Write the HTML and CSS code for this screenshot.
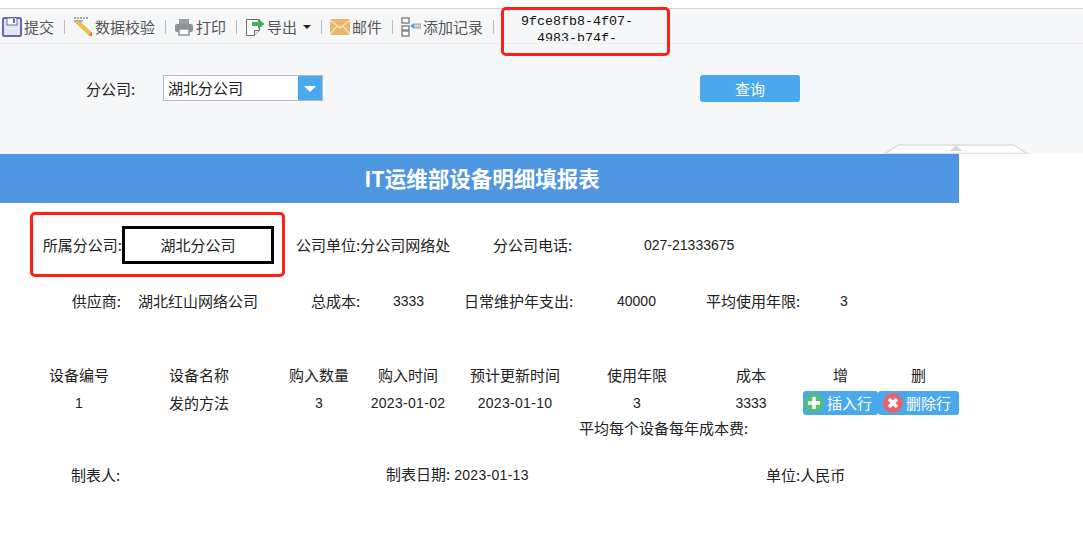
FILE: index.html
```html
<!DOCTYPE html>
<html lang="zh-CN">
<head>
    <meta charset="UTF-8">
    <meta name="viewport" content="width=device-width, initial-scale=1.0">
    <title>IT运维部设备明细填报表</title>
    <link rel="stylesheet" href="styles.css">
</head>
<body>
    <div class="toolbar">
        <div class="tool">
            <svg width="20" height="20" viewBox="0 0 20 20"><rect x="1" y="1" width="18" height="18" rx="1.500" fill="#e4e7f3" stroke="#5f6cab" stroke-width="2"/><rect x="5" y="1" width="10" height="7" fill="#fff" stroke="#5f6cab"/><rect x="11" y="2" width="2" height="4" fill="#5f6cab"/></svg>
            <span>提交</span>
        </div>
        <i class="sep"></i>
        <div class="tool">
            <svg width="20" height="20" viewBox="0 0 20 20"><path d="M1 1h15" stroke="#888" stroke-width="1.500" stroke-dasharray="2 1"/><path d="M1 4h9" stroke="#4aa9ec" stroke-width="1.500"/><path d="M2 5l3-2 14 13-2 3z" fill="#f1c04c" stroke="#d99a2b" stroke-width=".6"/><path d="M16 18l2.500-2.500 1 4z" fill="#ea5a4e"/></svg>
            <span>数据校验</span>
        </div>
        <i class="sep"></i>
        <div class="tool">
            <svg width="20" height="20" viewBox="0 0 20 20"><rect x="5" y="2" width="10" height="5" fill="#9a9ea3"/><rect x="1" y="7" width="18" height="8" rx="2" fill="#8f9398"/><rect x="5" y="12" width="10" height="6" fill="#fff" stroke="#8f9398" stroke-width="1.500"/></svg>
            <span>打印</span>
        </div>
        <i class="sep"></i>
        <div class="tool">
            <svg width="20" height="20" viewBox="0 0 20 20"><path d="M1.500 2.500h13v11l-5 5h-8z" fill="#fff" stroke="#6b6b6b"/><path d="M14.500 13.500h-5v5" fill="#eee" stroke="#6b6b6b"/><path d="M7 5h6V1.500L19.500 7 13 12V9H7z" fill="#3fae5a"/></svg>
            <span>导出</span>
            <i class="caret"></i>
        </div>
        <i class="sep"></i>
        <div class="tool">
            <svg width="20" height="20" viewBox="0 0 20 20"><rect y="2" width="20" height="16" rx="1.500" fill="#eab56c"/><path d="M0 3l10 8 10-8M0 17l7-8M20 17l-7-8" fill="none" stroke="#fbe6c4" stroke-width="1.300"/></svg>
            <span>邮件</span>
        </div>
        <i class="sep"></i>
        <div class="tool">
            <svg width="20" height="20" viewBox="0 0 20 20"><g fill="#fff" stroke="#777" stroke-width="1.300"><rect x="1" y="1" width="7" height="5"/><rect x="1" y="9" width="7" height="4"/><rect x="1" y="14" width="7" height="5"/></g><rect x="13" y="7" width="7" height="4" fill="#cfd6de" stroke="#8a929b" stroke-width=".8"/><path d="M9 9l4-3v6z" fill="#4aa9ec"/></svg>
            <span>添加记录</span>
        </div>
        <i class="sep"></i>
        <div class="record-id">9fce8fb8-4f07-<br>4983-b74f-</div>
    </div>

    <div class="filter">
        <label class="filter-label">分公司:</label>
        <div class="combo">
            <span class="combo-value">湖北分公司</span>
            <span class="combo-arrow"></span>
        </div>
        <button class="query-btn">查询</button>
        <svg class="collapse" width="144" height="10" viewBox="0 0 144 10"><path d="M1 9.500l13-8.500h116l13 8.500z" fill="#fff" stroke="#dedede" stroke-width="1.500"/><path d="M66 7l6-6 6 6z" fill="#d6d6d6"/></svg>
    </div>

    <div class="report">
        <h1 class="report-title">IT运维部设备明细填报表</h1>

        <div class="row row-company">
            <span class="right">所属分公司:</span>
            <span class="company-box">湖北分公司</span>
            <span>公司单位:分公司网络处</span>
            <span>分公司电话:</span>
            <span class="num">027-21333675</span>
        </div>

        <div class="row row-supplier">
            <span class="right">供应商:</span>
            <span class="supplier-name">湖北红山网络公司</span>
            <span>总成本:</span>
            <span class="num">3333</span>
            <span>日常维护年支出:</span>
            <span class="num">40000</span>
            <span>平均使用年限:</span>
            <span class="num">3</span>
        </div>

        <div class="row row-device row-head">
            <span>设备编号</span>
            <span>设备名称</span>
            <span>购入数量</span>
            <span>购入时间</span>
            <span>预计更新时间</span>
            <span>使用年限</span>
            <span>成本</span>
            <span>增</span>
            <span>删</span>
        </div>

        <div class="row row-device row-data">
            <span class="num">1</span>
            <span>发的方法</span>
            <span class="num">3</span>
            <span class="num date">2023-01-02</span>
            <span class="num date">2023-01-10</span>
            <span class="num">3</span>
            <span class="num">3333</span>
            <button class="row-btn">
                <svg width="20" height="20" viewBox="0 0 20 20"><circle cx="10" cy="10" r="10" fill="#52c07a"/><path d="M10 4v12M4 10h12" stroke="#fff" stroke-width="3.500"/></svg>
                插入行
            </button>
            <button class="row-btn row-btn-del">
                <svg width="20" height="20" viewBox="0 0 20 20"><circle cx="10" cy="10" r="10" fill="#e5636f"/><path d="M6 6l8 8M14 6l-8 8" stroke="#fff" stroke-width="3.500"/></svg>
                删除行
            </button>
        </div>

        <div class="row row-average">平均每个设备每年成本费:</div>

        <div class="row row-footer">
            <span>制表人:</span>
            <span>制表日期:<span class="num date footer-date">2023-01-13</span></span>
            <span>单位:人民币</span>
        </div>
    </div>

    <!-- red annotation boxes drawn on the screenshot -->
    <div class="mark mark-id"></div>
    <div class="mark mark-company"></div>
</body>
</html>
```

FILE: styles.css
```css
body {
    margin: 0;
    padding-top: 8px;
    background-color: #fff;
    color: #222;
    font-family: "Noto Sans CJK SC", "Liberation Sans", sans-serif;
    font-size: 15px;
}
.toolbar {
    display: flex;
    align-items: center;
    height: 33px;
    padding: 1px 0 0 2px;
    background-color: #f6f7f9;
    border-top: 1px solid #d6d6d6;
    border-bottom: 1px solid #ececec;
    color: #555;
}
.tool {
    display: flex;
    align-items: center;
    gap: 2px;
    white-space: nowrap;
}
.sep {
    width: 1px;
    height: 14px;
    margin: 0 8px 0 10px;
    background-color: #bbb;
}
.caret {
    width: 0;
    height: 0;
    margin-left: 4px;
    border: 4px solid transparent;
    border-top: 4px solid #222;
    border-bottom: 0;
}
.record-id {
    align-self: flex-start;
    width: 140px;
    height: 28px;
    margin-left: 5px;
    padding-top: 3px;
    overflow: hidden;
    color: #111;
    font-family: "Liberation Mono", monospace;
    font-size: 13.330px;
    line-height: 17px;
    text-align: center;
}
.filter {
    position: relative;
    display: flex;
    align-items: center;
    height: 110px;
    padding: 0 0 22px 86px;
    box-sizing: border-box;
    background-color: #f6f7f9;
}
.filter-label {
    width: 77px;
    color: #222;
}
.combo {
    display: flex;
    width: 160px;
    height: 26px;
    box-sizing: border-box;
    background-color: #fff;
    border: 1px solid #b5b9c4;
}
.combo-value {
    flex: 1;
    padding-left: 4px;
    line-height: 24px;
}
.combo-arrow {
    position: relative;
    width: 24px;
    background-color: #4aa9ec;
}
.combo-arrow::after {
    content: "";
    position: absolute;
    left: 6px;
    top: 10px;
    border: 6px solid transparent;
    border-top: 6px solid #fff;
    border-bottom: 0;
}
.query-btn {
    width: 100px;
    height: 27px;
    margin-left: 377px;
    padding: 0;
    background-color: #4aa9ec;
    border: 0;
    border-radius: 3px;
    color: #fff;
    font: inherit;
}
.collapse {
    position: absolute;
    right: 55px;
    bottom: 0;
}
.report {
    width: 959px;
}
.report-title {
    height: 49px;
    margin: 0;
    padding-left: 5px;
    background-color: #4e96e2;
    color: #fff;
    font-size: 21.500px;
    font-weight: bold;
    line-height: 47px;
    text-align: center;
}
.row {
    display: grid;
    align-items: center;
    height: 20px;
    line-height: 20px;
    white-space: nowrap;
}
.right {
    text-align: right;
}
.num {
    font-family: "Liberation Sans", sans-serif;
    font-size: 14px;
}
.date {
    letter-spacing: .3px;
}
.footer-date {
    margin-left: 4px;
}
.row-company {
    grid-template-columns: 122px 174px 197px 151px auto;
    height: 38px;
    margin-top: 23px;
}
.company-box {
    width: 152px;
    height: 38px;
    box-sizing: border-box;
    border: 3px solid #000;
    line-height: 32px;
    text-align: center;
}
.row-supplier {
    grid-template-columns: 121px 190px 82px 71px 153px 89px 134px auto;
    margin-top: 27px;
}
.supplier-name {
    padding-left: 17px;
}
.row-device {
    grid-template-columns: 84px 156px 84px 94px 120px 124px 104px 75px 81px;
    padding-left: 37px;
    text-align: center;
}
.row-head {
    margin-top: 54px;
}
.row-data {
    height: 24px;
    margin-top: 6px;
}
.row-btn {
    display: flex;
    align-items: center;
    gap: 3px;
    height: 24px;
    padding: 0 0 0 1px;
    background-color: #4aa9ec;
    border: 0;
    border-radius: 3px;
    color: #fff;
    font: inherit;
}
.row-btn-del {
    padding-left: 5px;
}
.row-average {
    display: block;
    margin-top: 3px;
    padding-left: 579px;
}
.row-footer {
    grid-template-columns: 315px 380px auto;
    margin-top: 26px;
    padding-left: 71px;
}
.mark {
    position: absolute;
    box-sizing: border-box;
    border: 3px solid #fb2118;
    border-radius: 5px;
}
.mark-id {
    left: 501px;
    top: 7px;
    width: 169px;
    height: 49px;
}
.mark-company {
    left: 30px;
    top: 212px;
    width: 255px;
    height: 65px;
}
```
